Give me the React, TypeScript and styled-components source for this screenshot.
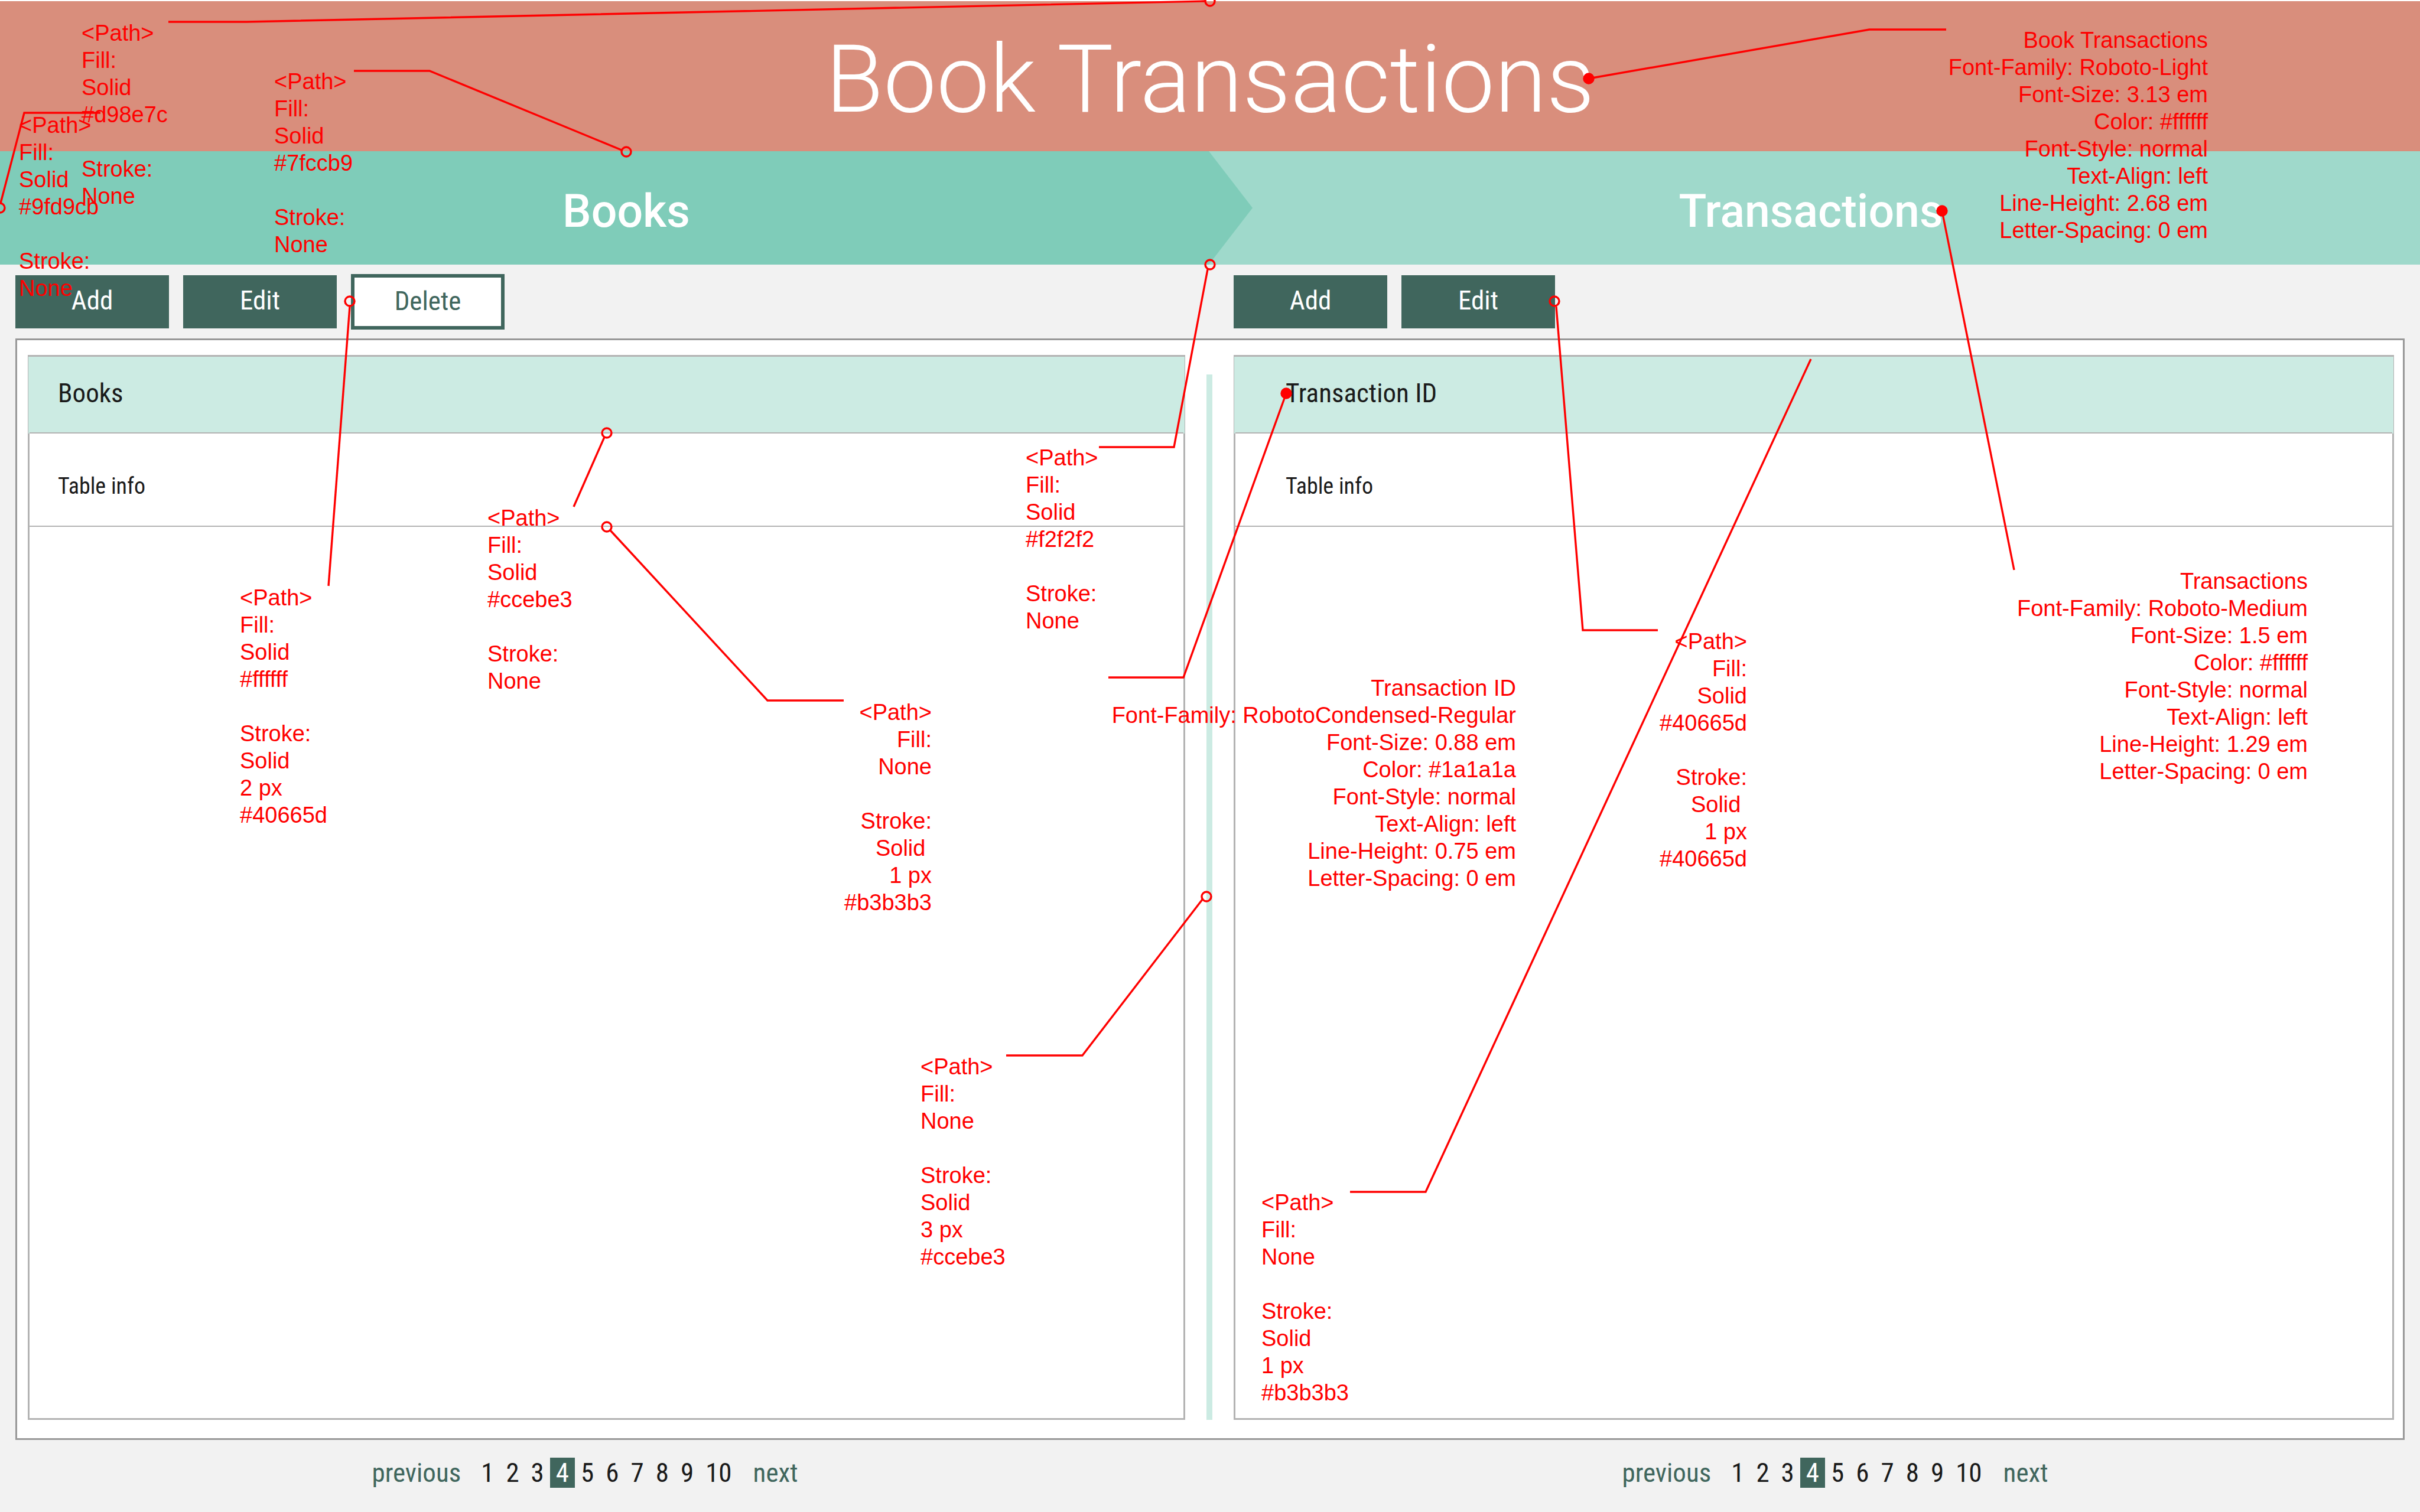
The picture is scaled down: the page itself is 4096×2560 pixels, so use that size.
import React from 'react';
import styled, { createGlobalStyle, css } from 'styled-components';

const color = {
  coral: '#d98e7c',
  mint: '#7fccb9',
  mintLight: '#9fd9cb',
  mintPale: '#ccebe3',
  green: '#40665d',
  ink: '#1a1a1a',
  page: '#f2f2f2',
  frame: '#999999',
  line: '#b3b3b3',
  note: '#ff0000',
};

const condensed = "'Roboto Condensed', Roboto, 'Liberation Sans', sans-serif";

const GlobalStyle = createGlobalStyle`
  *, *::before, *::after { box-sizing: border-box; }
  html, body, #root { height: 100%; }
  body {
    margin: 0;
    background: ${color.page};
    color: ${color.ink};
    font-family: Roboto, 'Liberation Sans', sans-serif;
  }
`;

const Page = styled.div`
  position: relative;
  display: flex;
  flex-direction: column;
  min-height: 100%;
  overflow: hidden;
`;

const Header = styled.header`
  display: flex;
  justify-content: center;
  align-items: center;
  height: 256px;
  padding-top: 12px;
  border-top: 2px solid #ffffff;
  background: ${color.coral};
`;

const Title = styled.h1`
  margin: 0;
  color: #ffffff;
  font-size: 160px;
  font-weight: 300;
  line-height: 192px;
`;

const Steps = styled.nav`
  display: grid;
  grid-template-columns: 1fr 1fr;
  height: 192px;
  background: ${color.mintLight};
`;

const Step = styled.div<{ $active?: boolean }>`
  display: flex;
  justify-content: center;
  align-items: center;
  padding: 12px 14px 0 0;
  ${(p) =>
    p.$active &&
    css`
      margin-right: -72px;
      padding-right: 0;
      background: ${color.mint};
      clip-path: polygon(0 0, calc(100% - 74px) 0, 100% 50%, calc(100% - 74px) 100%, 0 100%);
    `}
`;

const StepTitle = styled.h2`
  margin: 0;
  color: #ffffff;
  font-size: 77px;
  font-weight: 500;
  line-height: 96px;
`;

const Toolbars = styled.div`
  display: grid;
  grid-template-columns: 1fr 1fr;
  height: 125px;
`;

const Toolbar = styled.div<{ $inset: number }>`
  display: flex;
  align-items: center;
  gap: 24px;
  padding-left: ${(p) => p.$inset}px;
`;

const Button = styled.button<{ $outlined?: boolean }>`
  width: 260px;
  height: 90px;
  padding: 0 0 4px;
  border: 0;
  background: ${color.green};
  color: #ffffff;
  font-family: ${condensed};
  font-size: 45px;
  line-height: 52px;
  ${(p) =>
    p.$outlined &&
    css`
      height: 94px;
      padding: 0 0 2px;
      border: 6px solid ${color.green};
      background: #ffffff;
      color: ${color.green};
    `}
`;

const Board = styled.main`
  display: grid;
  flex: 1;
  grid-template-columns: 1959fr 10px 1964fr;
  gap: 36px;
  margin: 0 26px;
  padding: 25px 15px 31px 18px;
  border: 3px solid ${color.frame};
  background: #ffffff;
`;

const Divider = styled.div`
  margin-top: 33px;
  background: ${color.mintPale};
`;

const Panel = styled.section`
  border: 3px solid ${color.line};
`;

const Table = styled.table<{ $inset: number }>`
  width: 100%;
  border-collapse: separate;
  border-spacing: 0;
  font-family: ${condensed};
  text-align: left;

  th,
  td {
    padding: 0 0 0 ${(p) => p.$inset}px;
    border-bottom: 2px solid ${color.line};
    font-weight: 400;
  }
`;

const HeadCell = styled.th`
  height: 130px;
  background: ${color.mintPale};
  box-shadow: -2px 0 ${color.mintPale}, 2px 0 ${color.mintPale};
  font-size: 45px;
  line-height: 52px;

  span {
    display: block;
    padding-bottom: 4px;
  }
`;

const Cell = styled.td`
  height: 158px;
  font-size: 38px;
  line-height: 46px;

  span {
    display: block;
    padding-top: 22px;
  }
`;

const Footer = styled.footer`
  display: grid;
  grid-template-columns: 1fr 1fr;
  gap: 136px;
  padding: 30px 0 41px;
`;

const Pagination = styled.nav`
  display: flex;
  justify-content: center;
  gap: 24px;
  font-family: ${condensed};
  font-size: 45px;
  line-height: 51px;
`;

const Pages = styled.div`
  display: flex;
  padding-right: 2px;
`;

const PageLink = styled.a<{ $current?: boolean }>`
  padding: 0 10px;
  background: ${(p) => (p.$current ? color.green : 'transparent')};
  color: ${(p) => (p.$current ? '#ffffff' : color.ink)};
  text-decoration: none;
`;

const TurnLink = styled.a`
  color: ${color.green};
  text-decoration: none;
`;

const Annotations = styled.aside`
  position: absolute;
  inset: 0;
  pointer-events: none;
`;

const Leaders = styled.svg`
  display: block;
  width: 100%;
  height: 100%;
  fill: none;
  stroke: ${color.note};
  stroke-width: 3.4;
`;

const Note = styled.p<{ $x: number; $y: number; $right?: boolean }>`
  position: absolute;
  top: ${(p) => p.$y}px;
  ${(p) => (p.$right ? `right: calc(100% - ${p.$x}px);` : `left: ${p.$x}px;`)}
  margin: 0;
  color: ${color.note};
  font-family: 'Liberation Sans', Arial, sans-serif;
  font-size: 38px;
  line-height: 46px;
  text-align: ${(p) => (p.$right ? 'right' : 'left')};
  white-space: pre;
`;

type NoteData = { x: number; y: number; right?: boolean; lines: string[] };

const pathNote = (fill: string[], stroke: string[]) => ['<Path>', 'Fill:', ...fill, '', 'Stroke:', ...stroke];

const fontNote = (name: string, family: string, size: string, hex: string, lineHeight: string) => [
  name,
  `Font-Family: ${family}`,
  `Font-Size: ${size} em`,
  `Color: ${hex}`,
  'Font-Style: normal',
  'Text-Align: left',
  `Line-Height: ${lineHeight} em`,
  'Letter-Spacing: 0 em',
];

const notes: NoteData[] = [
  { x: 138, y: 33, lines: pathNote(['Solid', '#d98e7c'], ['None']) },
  { x: 464, y: 115, lines: pathNote(['Solid', '#7fccb9'], ['None']) },
  { x: 32, y: 189, lines: pathNote(['Solid', '#9fd9cb'], ['None']) },
  { x: 406, y: 989, lines: pathNote(['Solid', '#ffffff'], ['Solid', '2 px', '#40665d']) },
  { x: 825, y: 854, lines: pathNote(['Solid', '#ccebe3'], ['None']) },
  { x: 1736, y: 752, lines: pathNote(['Solid', '#f2f2f2'], ['None']) },
  { x: 1577, y: 1183, right: true, lines: pathNote(['None'], ['Solid\u00a0', '1 px', '#b3b3b3']) },
  { x: 2957, y: 1063, right: true, lines: pathNote(['Solid', '#40665d'], ['Solid\u00a0', '1 px', '#40665d']) },
  { x: 1558, y: 1783, lines: pathNote(['None'], ['Solid', '3 px', '#ccebe3']) },
  { x: 2135, y: 2013, lines: pathNote(['None'], ['Solid', '1 px', '#b3b3b3']) },
  { x: 3737, y: 45, right: true, lines: fontNote('Book Transactions', 'Roboto-Light', '3.13', '#ffffff', '2.68') },
  { x: 2566, y: 1142, right: true, lines: fontNote('Transaction ID', 'RobotoCondensed-Regular', '0.88', '#1a1a1a', '0.75') },
  { x: 3906, y: 961, right: true, lines: fontNote('Transactions', 'Roboto-Medium', '1.5', '#ffffff', '1.29') },
];

const leaders = [
  '285,37 417,37 2039,2',
  '599,120 727,120 1052,254',
  '170,191 41,191 1,344',
  '2689,133 3164,50 3294,50',
  '3287,357 3409,965',
  '592,519 556,992',
  '1023,740 971,858',
  '1033,898 1299,1186 1428,1186',
  '2044,456 1987,757 1860,757',
  '2177,666 2003,1147 1876,1147',
  '2634,519 2679,1067 2806,1067',
  '2035,1523 1832,1787 1703,1787',
  '3065,608 2413,2018 2285,2018',
];

const rings = [
  [2048, 2],
  [1060, 257],
  [0, 352],
  [592, 510],
  [1027, 733],
  [1027, 892],
  [2048, 448],
  [2631, 510],
  [2042, 1518],
];

const dots = [
  [2689, 133],
  [3287, 357],
  [2177, 666],
];

function Pager({ label }: { label: string }) {
  return (
    <Pagination aria-label={label}>
      <TurnLink href="#previous">previous</TurnLink>
      <Pages>
        {[1, 2, 3, 4, 5, 6, 7, 8, 9, 10].map((n) => (
          <PageLink key={n} href={`#page-${n}`} $current={n === 4} aria-current={n === 4 ? 'page' : undefined}>
            {n}
          </PageLink>
        ))}
      </Pages>
      <TurnLink href="#next">next</TurnLink>
    </Pagination>
  );
}

function DataPanel({ heading, inset }: { heading: string; inset: number }) {
  return (
    <Panel>
      <Table $inset={inset}>
        <thead>
          <tr>
            <HeadCell scope="col">
              <span>{heading}</span>
            </HeadCell>
          </tr>
        </thead>
        <tbody>
          <tr>
            <Cell>
              <span>Table info</span>
            </Cell>
          </tr>
        </tbody>
      </Table>
    </Panel>
  );
}

export default function App() {
  return (
    <>
      <GlobalStyle />
      <Page>
        <Header>
          <Title>Book Transactions</Title>
        </Header>
        <Steps>
          <Step $active>
            <StepTitle>Books</StepTitle>
          </Step>
          <Step>
            <StepTitle>Transactions</StepTitle>
          </Step>
        </Steps>
        <Toolbars>
          <Toolbar $inset={26}>
            <Button type="button">Add</Button>
            <Button type="button">Edit</Button>
            <Button type="button" $outlined>
              Delete
            </Button>
          </Toolbar>
          <Toolbar $inset={40}>
            <Button type="button">Add</Button>
            <Button type="button">Edit</Button>
          </Toolbar>
        </Toolbars>
        <Board>
          <DataPanel heading="Books" inset={48} />
          <Divider />
          <DataPanel heading="Transaction ID" inset={85} />
        </Board>
        <Footer>
          <Pager label="Books pages" />
          <Pager label="Transactions pages" />
        </Footer>
        <Annotations>
          <Leaders viewBox="0 0 4096 2560" preserveAspectRatio="none">
            {leaders.map((points) => (
              <polyline key={points} points={points} />
            ))}
            {rings.map(([cx, cy]) => (
              <circle key={`${cx}-${cy}`} cx={cx} cy={cy} r="8" />
            ))}
            {dots.map(([cx, cy]) => (
              <circle key={`${cx}-${cy}`} cx={cx} cy={cy} r="8" fill={color.note} />
            ))}
          </Leaders>
          {notes.map((note) => (
            <Note key={`${note.x}-${note.y}`} $x={note.x} $y={note.y} $right={note.right}>
              {note.lines.join('\n')}
            </Note>
          ))}
        </Annotations>
      </Page>
    </>
  );
}
